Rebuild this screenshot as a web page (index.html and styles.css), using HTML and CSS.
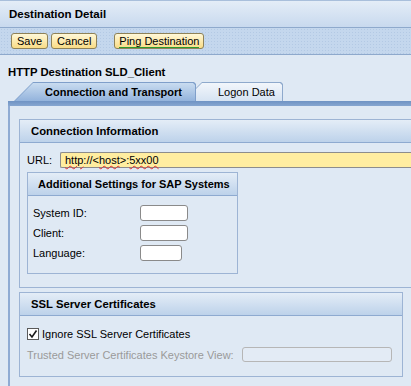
FILE: index.html
```html
<!DOCTYPE html>
<html lang="en">

<head>
    <meta charset="UTF-8">
    <meta name="viewport" content="width=device-width, initial-scale=1.0">
    <title>Destination Detail</title>
    <link rel="stylesheet" href="styles.css">
</head>

<body>
    <!-- 标题栏 -->
    <div class="titlebar">Destination Detail</div>
    <!-- 工具栏 -->
    <div class="toolbar">
        <button class="btn">Save</button>
        <button class="btn">Cancel</button>
        <button class="btn ping"><span>Ping Destination</span></button>
    </div>
    <div class="content">
        <div class="dest-title">HTTP Destination SLD_Client</div>
        <div class="tabstrip">
            <div class="tab active"><div class="tab-face">Connection and Transport</div></div>
            <div class="tab"><div class="tab-face">Logon Data</div></div>
        </div>
        <div class="tabbar"></div>
        <div class="tabpanel">
            <div class="group conn">
                <div class="group-head">Connection Information</div>
                <div class="group-body">
                    <div class="url-row">
                        <label class="url-label">URL:</label>
                        <div class="url-input"><span class="squiggle">http</span>://&lt;<span class="squiggle">host</span>&gt;:<span class="squiggle">5xx00</span></div>
                    </div>
                    <div class="group sap">
                        <div class="group-head">Additional Settings for SAP Systems</div>
                        <div class="sap-body">
                            <div class="field"><span class="field-label">System ID:</span><input type="text" class="small"></div>
                            <div class="field"><span class="field-label">Client:</span><input type="text" class="small"></div>
                            <div class="field"><span class="field-label">Language:</span><input type="text" class="small lang"></div>
                        </div>
                    </div>
                </div>
            </div>
            <div class="group ssl">
                <div class="group-head">SSL Server Certificates</div>
                <div class="ssl-body">
                    <div class="check-row">
                        <span class="checkbox">
                            <svg width="10" height="10" viewBox="0 0 10 10"><path d="M1.5 5 L4 8 L8.5 1.5" fill="none" stroke="#1a1a1a" stroke-width="1.6"/></svg>
                        </span>
                        <span>Ignore SSL Server Certificates</span>
                    </div>
                    <div class="trust-row">
                        <span class="trust-label">Trusted Server Certificates Keystore View:</span>
                        <input type="text" class="trust-input" disabled>
                    </div>
                </div>
            </div>
        </div>
    </div>
</body>

</html>
```

FILE: styles.css
```css
body {
    margin: 0;
    padding: 0;
    background: #dfe9f4;
    font-family: "Liberation Sans", Arial, sans-serif;
    font-size: 11px;
    color: #000;
    height: 386px;
    overflow: hidden;
}

.titlebar {
    height: 26px;
    line-height: 26px;
    padding-left: 9px;
    font-weight: 700;
    font-size: 11.5px;
    border-top: 1px solid #a9bfdb;
    border-bottom: 1px solid #8ea9cc;
    background: linear-gradient(#e4edf7, #c8d9ee);
}

.toolbar {
    height: 26px;
    display: flex;
    align-items: center;
    padding-left: 11px;
    gap: 3px;
    border-bottom: 1px solid #8ea9cc;
    background-color: #c4d7ed;
    background-image: radial-gradient(#b3c9e4 0.7px, transparent 0.9px);
    background-size: 3px 3px;
}

.btn {
    height: 16px;
    padding: 0 5px;
    margin: 0;
    font-family: inherit;
    font-size: 11px;
    line-height: 14px;
    color: #000;
    border: 1px solid #8f8257;
    border-radius: 3px;
    background: linear-gradient(#fff8d8, #f9dc86);
}

.ping {
    margin-left: 14px;
    padding: 0 4px;
}

.ping span {
    border-bottom: 1px solid #2e9a2e;
}

.content {
    padding-top: 10px;
}

.dest-title {
    font-weight: 700;
    line-height: 14px;
    padding-left: 8px;
    font-size: 11.3px;
}

.tabstrip {
    display: flex;
    margin-top: 3px;
    margin-left: 14px;
    height: 19px;
}

.tab {
    position: relative;
    height: 19px;
    background: #8ea9cc;
    clip-path: polygon(19px 0, calc(100% - 2px) 0, 100% 2px, 100% 100%, 0 100%);
}

.tab-face {
    height: 18px;
    line-height: 19px;
    margin: 1px 1px 0 1px;
    padding: 0 10px 0 34px;
    white-space: nowrap;
    background: linear-gradient(#f2f6fb, #d6e3f2);
    clip-path: polygon(18px 0, calc(100% - 2px) 0, 100% 2px, 100% 100%, 0 100%);
}

.tab.active {
    z-index: 2;
    width: 182px;
    background: #7f9fca;
}

.tab.active .tab-face {
    font-weight: 700;
    padding-left: 30px;
    background: linear-gradient(#c9dcf0, #93b3dc);
}

.tab + .tab {
    margin-left: -13px;
    width: 100px;
}

.tabbar {
    height: 5px;
    margin-left: 8px;
    background: linear-gradient(#6f93c4, #86a6d0);
}

.tabpanel {
    margin-left: 8px;
    padding: 13px 0 0 9px;
    border-left: 2px solid #8fabd3;
    height: 267px;
}

.group {
    border: 1px solid #9db4d4;
}

.group-head {
    height: 22px;
    line-height: 22px;
    font-weight: 700;
    font-size: 11.3px;
    padding-left: 11px;
    white-space: nowrap;
    border-bottom: 1px solid #8eaad0;
    background: linear-gradient(#e4edf7, #bdd2ea);
}

.conn {
    border-right: none;
}

.group-body {
    padding: 9px 0 13px 7px;
}

.url-row {
    display: flex;
    align-items: center;
}

.url-label {
    width: 33px;
}

.url-input {
    flex: 1;
    height: 14px;
    line-height: 14px;
    padding-left: 4px;
    background: #ffeda0;
    border: 1px solid #8c8c8c;
    border-right: none;
    border-radius: 2px 0 0 2px;
}

.squiggle {
    text-decoration: underline wavy #e03030;
    text-decoration-thickness: 1px;
    text-underline-offset: 1px;
}

.sap {
    width: 209px;
    margin-top: 4px;
}

.sap .group-head {
    padding-left: 10px;
    font-size: 11px;
}

.sap-body {
    padding: 9px 0 12px 5px;
    display: flex;
    flex-direction: column;
    gap: 4px;
}

.field {
    display: flex;
    align-items: center;
}

.field-label {
    width: 107px;
}

.small {
    width: 44px;
    height: 12px;
    margin: 0;
    padding: 1px;
    border: 1px solid #8a8a8a;
    border-radius: 3px;
    background: #fff;
}

.small.lang {
    width: 38px;
}

.ssl {
    width: 382px;
    margin-top: 4px;
}

.ssl-body {
    padding: 11px 0 14px 7px;
}

.check-row {
    display: flex;
    align-items: center;
    gap: 3px;
    height: 13px;
}

.checkbox {
    width: 10px;
    height: 10px;
    border: 1px solid #5a5a5a;
    background: #fff;
    display: flex;
    align-items: center;
    justify-content: center;
}

.trust-row {
    display: flex;
    align-items: center;
    margin-top: 7px;
}

.trust-label {
    color: #9a9a9a;
    width: 215px;
}

.trust-input {
    width: 146px;
    height: 11px;
    margin: 0;
    padding: 1px;
    border: 1px solid #b6b6b6;
    border-radius: 3px;
    background: #e3ebf5;
}
```
